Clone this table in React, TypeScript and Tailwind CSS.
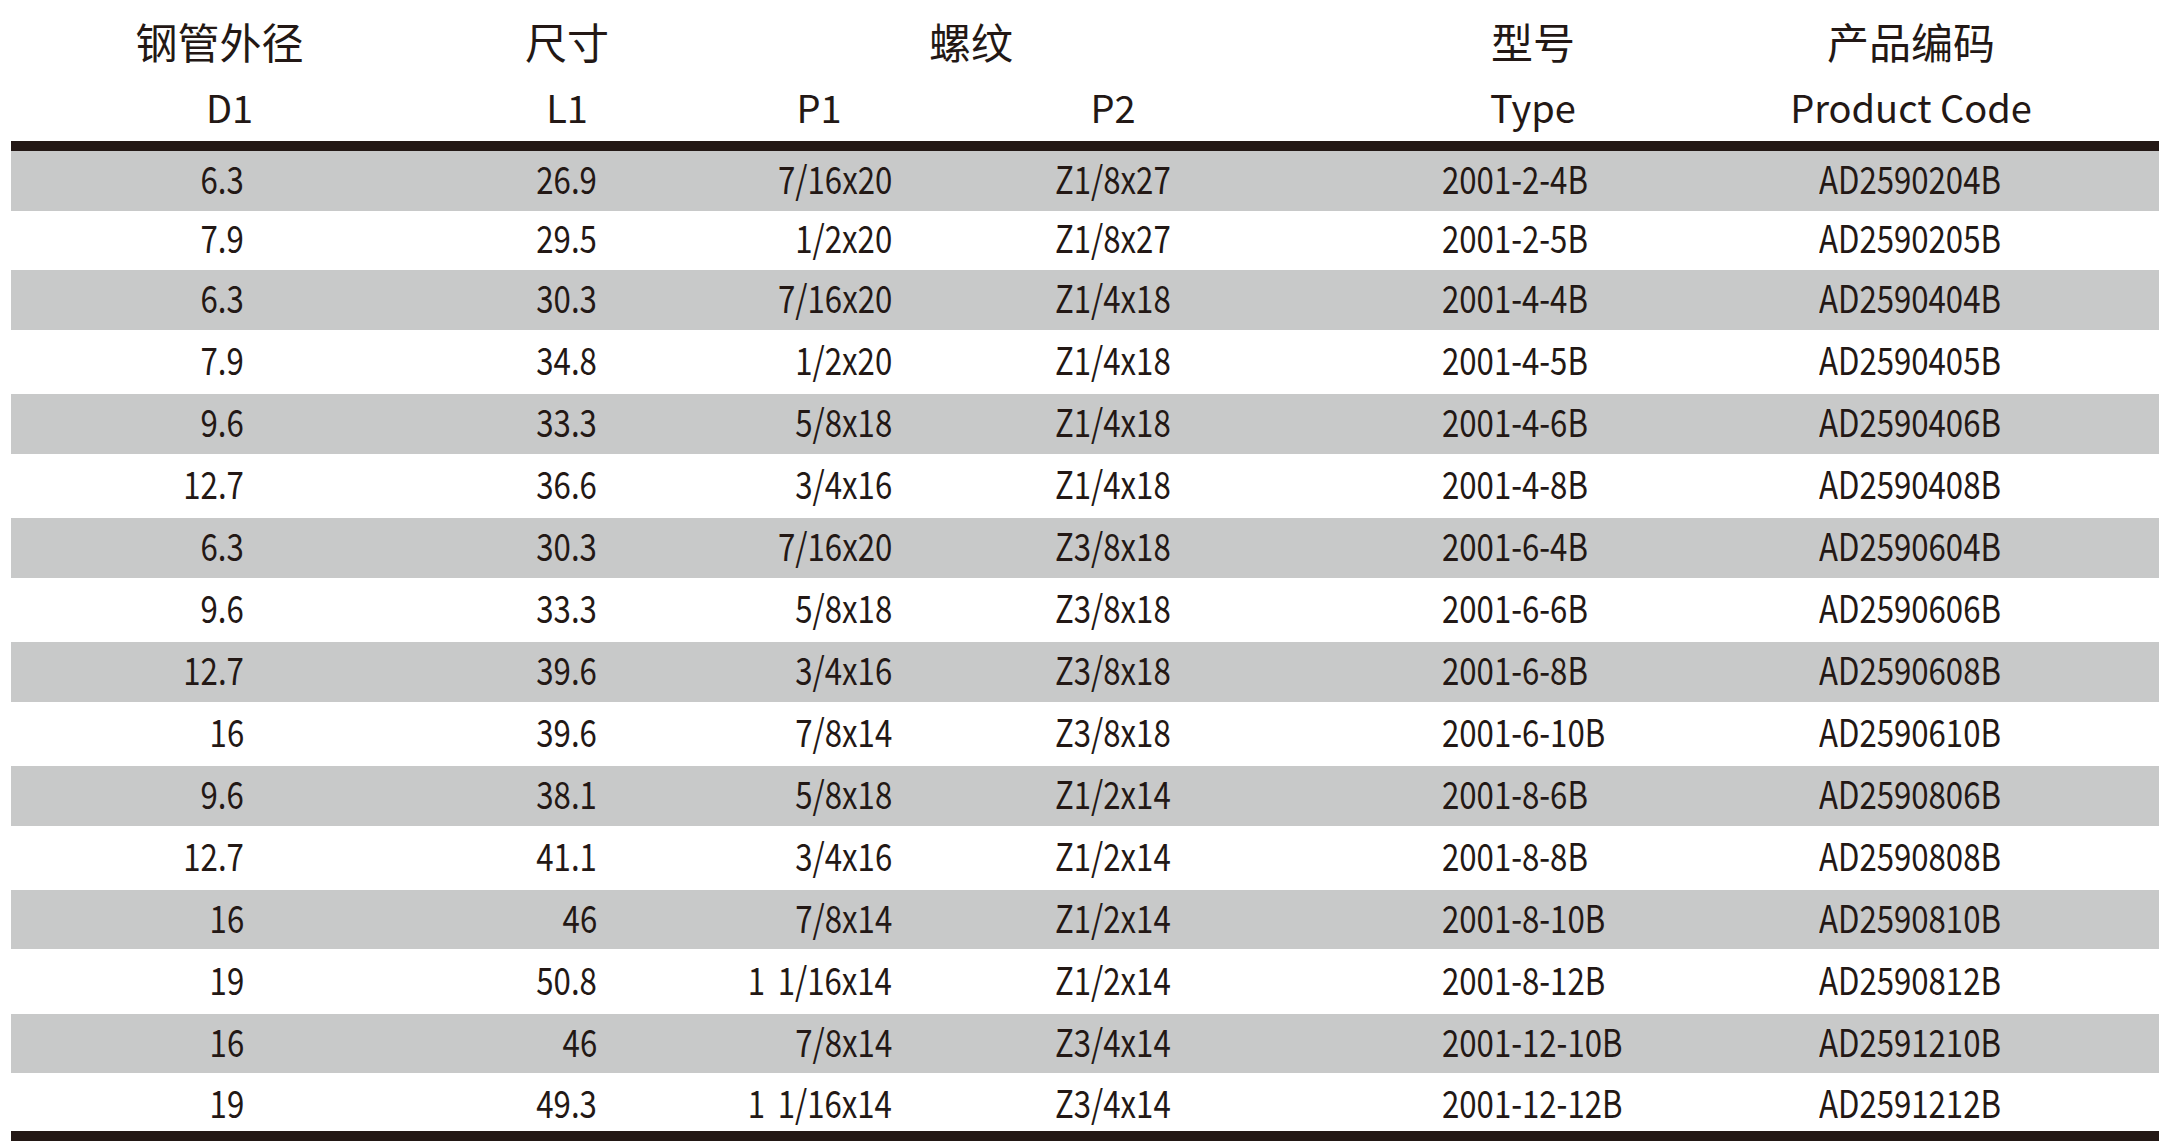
import React from 'react';

type Row = [string, string, string, string, string, string];

const rows: Row[] = [
  ['6.3', '26.9', '7/16x20', 'Z1/8x27', '2001-2-4B', 'AD2590204B'],
  ['7.9', '29.5', '1/2x20', 'Z1/8x27', '2001-2-5B', 'AD2590205B'],
  ['6.3', '30.3', '7/16x20', 'Z1/4x18', '2001-4-4B', 'AD2590404B'],
  ['7.9', '34.8', '1/2x20', 'Z1/4x18', '2001-4-5B', 'AD2590405B'],
  ['9.6', '33.3', '5/8x18', 'Z1/4x18', '2001-4-6B', 'AD2590406B'],
  ['12.7', '36.6', '3/4x16', 'Z1/4x18', '2001-4-8B', 'AD2590408B'],
  ['6.3', '30.3', '7/16x20', 'Z3/8x18', '2001-6-4B', 'AD2590604B'],
  ['9.6', '33.3', '5/8x18', 'Z3/8x18', '2001-6-6B', 'AD2590606B'],
  ['12.7', '39.6', '3/4x16', 'Z3/8x18', '2001-6-8B', 'AD2590608B'],
  ['16', '39.6', '7/8x14', 'Z3/8x18', '2001-6-10B', 'AD2590610B'],
  ['9.6', '38.1', '5/8x18', 'Z1/2x14', '2001-8-6B', 'AD2590806B'],
  ['12.7', '41.1', '3/4x16', 'Z1/2x14', '2001-8-8B', 'AD2590808B'],
  ['16', '46', '7/8x14', 'Z1/2x14', '2001-8-10B', 'AD2590810B'],
  ['19', '50.8', '1 1/16x14', 'Z1/2x14', '2001-8-12B', 'AD2590812B'],
  ['16', '46', '7/8x14', 'Z3/4x14', '2001-12-10B', 'AD2591210B'],
  ['19', '49.3', '1 1/16x14', 'Z3/4x14', '2001-12-12B', 'AD2591212B'],
];

// row band heights as measured: grey bands are a bit shorter than white ones
const rowHeight = (i: number) => {
  if (i === 0) return 'h-[59.7px]';
  if (i === 1) return 'h-[59.3px]';
  if (i === 2) return 'h-[60px]';
  if (i === 15) return 'h-[58px] pt-[6px]';
  return i % 2 === 0 ? 'h-[59.6px]' : 'h-[64.3px]';
};

const cols = 'grid grid-cols-[422px_268px_236px_352px_488px_268px_112px]';

function Cell({ children, className }: { children: React.ReactNode; className: string }) {
  return (
    <div className={`flex items-center pb-[6px] ${className}`}>
      <span className="inline-block whitespace-pre scale-x-[0.82]">{children}</span>
    </div>
  );
}

export default function App() {
  return (
    <div className="w-[2170px] h-[1147px] bg-white px-[11px] font-['Noto_Sans_CJK_SC','Noto_Sans',sans-serif] text-[#231815]">
      {/* header */}
      <div className={`${cols} h-[88px] pb-[6px] text-[42px] leading-none`}>
        <div className="flex items-center justify-center pr-[5px]">钢管外径</div>
        <div className="flex items-center justify-center">尺寸</div>
        <div className="col-span-2 flex items-center justify-center pr-[48px]">螺纹</div>
        <div className="flex items-center justify-center">型号</div>
        <div className="flex items-center justify-center">产品编码</div>
        <div />
      </div>
      <div className={`${cols} h-[34px] pb-[19px] text-[38px] leading-none`}>
        <div className="flex items-center justify-center pl-[15px]">D1</div>
        <div className="flex items-center justify-center">L1</div>
        <div className="flex items-center justify-center">P1</div>
        <div className="flex items-center justify-center">P2</div>
        <div className="flex items-center justify-center">Type</div>
        <div className="flex items-center justify-center">Product Code</div>
        <div />
      </div>
      <div className="h-[19px]" />
      <div className="h-[10px] bg-[#231815]" />

      {/* body */}
      {rows.map((r, i) => (
        <div
          key={i}
          className={`${cols} ${rowHeight(i)} text-[38px] leading-none ${i % 2 === 0 ? 'bg-[#c8c9c9]' : 'bg-white'}`}
        >
          <Cell className="justify-end pr-[189px] [&>span]:origin-right">{r[0]}</Cell>
          <Cell className="justify-end pr-[104px] [&>span]:origin-right">{r[1]}</Cell>
          <Cell className="justify-end pr-[45px] [&>span]:origin-right [word-spacing:7px]">{r[2]}</Cell>
          <Cell className="justify-start pl-[118px] [&>span]:origin-left">{r[3]}</Cell>
          <Cell className="justify-start pl-[153px] [&>span]:origin-left">{r[4]}</Cell>
          <Cell className="justify-start pl-[42px] [&>span]:origin-left">{r[5]}</Cell>
          <div />
        </div>
      ))}

      <div className="h-[10px] bg-[#231815]" />
    </div>
  );
}
